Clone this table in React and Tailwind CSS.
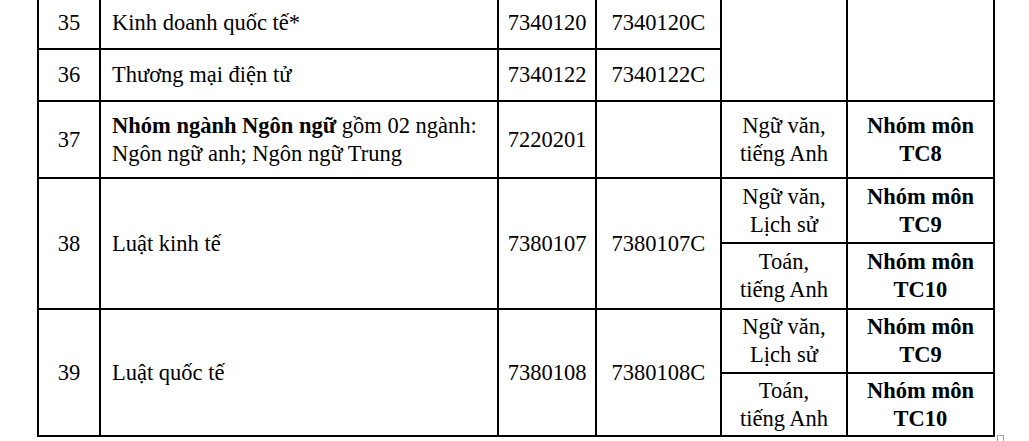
import React from 'react';

const cell = 'border-2 border-black align-middle p-0';

const Sub = ({ a, b, bold }) => (
  <span className={bold ? 'font-bold' : ''}>
    {a}
    <br />
    {b}
  </span>
);

export default function App() {
  return (
    <div
      className="relative w-[1029px] h-[441px] overflow-hidden bg-white text-black"
      style={{ fontFamily: '"Liberation Serif", "Times New Roman", serif' }}
    >
      <table className="ml-[37px] mt-[-4px] border-collapse table-fixed text-[22.5px] leading-[28px]">
        <colgroup>
          <col className="w-[62px]" />
          <col className="w-[398px]" />
          <col className="w-[98px]" />
          <col className="w-[125px]" />
          <col className="w-[126px]" />
          <col className="w-[147px]" />
        </colgroup>
        <tbody>
          <tr className="h-[52px]">
            <td className={`${cell} text-center`}>35</td>
            <td className={`${cell} pl-[11px]`}>Kinh doanh quốc tế*</td>
            <td className={`${cell} text-center`}>7340120</td>
            <td className={`${cell} text-center`}>7340120C</td>
            <td className={cell} rowSpan={2}></td>
            <td className={cell} rowSpan={2}></td>
          </tr>
          <tr className="h-[52px]">
            <td className={`${cell} text-center`}>36</td>
            <td className={`${cell} pl-[11px]`}>Thương mại điện tử</td>
            <td className={`${cell} text-center`}>7340122</td>
            <td className={`${cell} text-center`}>7340122C</td>
          </tr>
          <tr className="h-[77px]">
            <td className={`${cell} text-center`}>37</td>
            <td className={`${cell} pl-[11px]`}>
              <span className="font-bold">Nhóm ngành Ngôn ngữ</span> gồm 02 ngành:
              <br />
              Ngôn ngữ anh; Ngôn ngữ Trung
            </td>
            <td className={`${cell} text-center`}>7220201</td>
            <td className={cell}></td>
            <td className={`${cell} text-center`}>
              <Sub a="Ngữ văn," b="tiếng Anh" />
            </td>
            <td className={`${cell} text-center`}>
              <Sub a="Nhóm môn" b="TC8" bold />
            </td>
          </tr>
          <tr className="h-[65px]">
            <td className={`${cell} text-center`} rowSpan={2}>38</td>
            <td className={`${cell} pl-[11px]`} rowSpan={2}>Luật kinh tế</td>
            <td className={`${cell} text-center`} rowSpan={2}>7380107</td>
            <td className={`${cell} text-center`} rowSpan={2}>7380107C</td>
            <td className={`${cell} text-center`}>
              <Sub a="Ngữ văn," b="Lịch sử" />
            </td>
            <td className={`${cell} text-center`}>
              <Sub a="Nhóm môn" b="TC9" bold />
            </td>
          </tr>
          <tr className="h-[66px]">
            <td className={`${cell} text-center`}>
              <Sub a="Toán," b="tiếng Anh" />
            </td>
            <td className={`${cell} text-center`}>
              <Sub a="Nhóm môn" b="TC10" bold />
            </td>
          </tr>
          <tr className="h-[64px]">
            <td className={`${cell} text-center`} rowSpan={2}>39</td>
            <td className={`${cell} pl-[11px]`} rowSpan={2}>Luật quốc tế</td>
            <td className={`${cell} text-center`} rowSpan={2}>7380108</td>
            <td className={`${cell} text-center`} rowSpan={2}>7380108C</td>
            <td className={`${cell} text-center`}>
              <Sub a="Ngữ văn," b="Lịch sử" />
            </td>
            <td className={`${cell} text-center`}>
              <Sub a="Nhóm môn" b="TC9" bold />
            </td>
          </tr>
          <tr className="h-[63px]">
            <td className={`${cell} text-center`}>
              <Sub a="Toán," b="tiếng Anh" />
            </td>
            <td className={`${cell} text-center`}>
              <Sub a="Nhóm môn" b="TC10" bold />
            </td>
          </tr>
        </tbody>
      </table>
      {/* word end-of-row marker */}
      <div className="absolute left-[997px] top-[435px] w-[7px] h-[7px] border border-gray-400 bg-white" />
    </div>
  );
}
